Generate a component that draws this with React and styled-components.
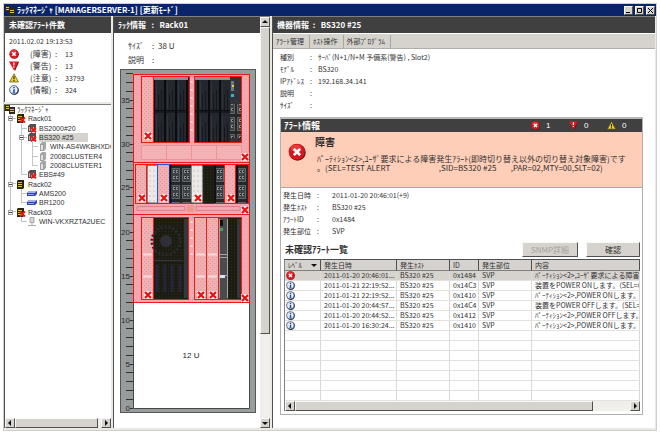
import React from "react";
import styled, { createGlobalStyle, css } from "styled-components";

const colors = {
  title: "#0a246a",
  header: "#404040",
  face: "#d6d3ce",
  frame: "#ebe9e4",
  shade: "#808080",
  dark: "#505050",
  text: "#303030",
  alert: "#ffceb8",
};

const GlobalStyle = createGlobalStyle`
  * {
    box-sizing: border-box;
  }

  body {
    margin: 0;
    background: #ffffff;
    color: ${colors.text};
    font-family: "Noto Sans CJK JP", sans-serif;
    font-size: 8px;
    line-height: 12px;
  }

  button {
    margin: 0;
    padding: 0;
    font: inherit;
    color: inherit;
  }
`;

const raised = css`
  background: ${colors.face};
  border: 1px solid;
  border-color: #f8f8f8 ${colors.dark} ${colors.dark} #f8f8f8;
`;

const Page = styled.div`
  display: flex;
  min-height: 100vh;
  padding: 3px 3px 4px;
`;

const Window = styled.div`
  flex: 1;
  min-width: 0;
  display: flex;
  flex-direction: column;
  background: ${colors.frame};
  border: 1px solid #d0cec8;
`;

const TitleBar = styled.header`
  display: flex;
  align-items: center;
  gap: 2px;
  height: 12px;
  padding: 0 1px;
  background: ${colors.title};
  color: #ffffff;
`;

const Title = styled.h1`
  flex: 1;
  margin: 0;
  font-size: 8px;
  line-height: 12px;
  white-space: pre;
`;

const WindowButton = styled.button`
  ${raised}
  display: flex;
  align-items: center;
  justify-content: center;
  width: 9px;
  height: 9px;
`;

const Columns = styled.main`
  flex: 1;
  display: grid;
  grid-template-columns: 107px 157px minmax(0, 1fr);
  gap: 2px;
  padding: 0 1px 2px 0;
`;

const LeftColumn = styled.div`
  display: flex;
  flex-direction: column;
  gap: 2px;
  min-width: 0;
`;

const Panel = styled.section`
  display: flex;
  flex-direction: column;
  flex: ${(props) => (props.$grow ? 1 : "none")};
  min-width: 0;
  background: #ffffff;
  border-left: 1px solid ${colors.dark};
  border-top: 1px solid ${colors.shade};
`;

const PanelHeader = styled.h2`
  height: 16px;
  margin: 0;
  padding: 0 4px;
  background: ${colors.header};
  color: #ffffff;
  font-size: 8px;
  line-height: 16px;
  white-space: pre;
`;

const Counts = styled.div`
  padding: 1px 4px 6px;
`;

const CountDate = styled.div`
  font-size: 7px;
  line-height: 14px;
`;

const CountRow = styled.div`
  display: grid;
  grid-template-columns: 21px 25px 10px 1fr;
  align-items: center;
  height: 12px;
`;

const CountValue = styled.span`
  font-size: 7px;
`;

const Tree = styled.ul`
  display: grid;
  grid-template-rows: repeat(13, 1fr);
  height: 121px;
  margin: 0;
  padding: 0;
  list-style: none;
  overflow: hidden;
`;

const TreeRow = styled.li`
  display: flex;
  align-items: stretch;
  min-height: 0;
  font-family: "Liberation Sans", "Noto Sans CJK JP", sans-serif;
  font-size: 7px;
  line-height: 9px;
  white-space: nowrap;
`;

const Guide = styled.span`
  flex: none;
  display: flex;
  align-items: center;
  justify-content: center;
  width: 11px;
  background-repeat: no-repeat;
  background-image: ${(props) => (props.$line ? "linear-gradient(#c4c4c4, #c4c4c4)" : "none")},
    ${(props) => (props.$tick ? "linear-gradient(#c4c4c4, #c4c4c4)" : "none")};
  background-size: 1px ${(props) => (props.$line === "half" ? "50%" : "100%")}, 6px 1px;
  background-position: 5px 0, 5px 4px;
`;

const Expander = styled.button`
  display: flex;
  width: 5px;
  height: 5px;
  border: 1px solid #a0a0a0;
  background: #ffffff;
  align-items: center;

  &::before {
    content: "";
    width: 3px;
    height: 1px;
    background: #404040;
  }
`;

const TreeIcon = styled.span`
  flex: none;
  display: flex;
  align-items: center;
  width: 12px;
`;

const TreeLabel = styled.span`
  align-self: center;
  padding-right: ${(props) => (props.$selected ? 14 : 0)}px;
  background: ${(props) => (props.$selected ? colors.face : "none")};
`;

const Spacer = styled.div`
  flex: 1;
`;

const Bar = styled.div`
  display: flex;
  flex-direction: ${(props) => (props.$vertical ? "column" : "row")};
  ${(props) => (props.$vertical ? "width: 10px;" : "height: 10px;")}
  background: #f0efec;
`;

const BarButton = styled.button`
  ${raised}
  flex: none;
  display: flex;
  align-items: center;
  justify-content: center;
  width: 10px;
  height: 10px;
`;

const Thumb = styled.div`
  ${raised}
  flex: ${(props) => props.$size};
`;

const Track = styled.div`
  flex: ${(props) => props.$size};
`;

const RackPanel = styled(Panel)`
  flex-direction: row;
`;

const RackBody = styled.div`
  flex: 1;
  min-width: 0;
`;

const RackInfo = styled.dl`
  display: grid;
  grid-template-columns: 24px 6px 1fr;
  margin: 0;
  padding: 6px 14px 2px;
  line-height: 14px;
`;

const Term = styled.dt`
  margin: 0;
  white-space: nowrap;
`;

const Value = styled.dd`
  margin: 0;
  white-space: nowrap;
`;

const RackSvg = styled.svg`
  display: block;
  margin-left: 6px;
`;

const Toolbar = styled.nav`
  display: flex;
  align-items: center;
  height: 16px;
  background: ${colors.face};
  border-top: 1px solid #ffffff;
  border-bottom: 1px solid #b0aea8;
`;

const ToolButton = styled.button`
  height: 13px;
  padding: 0 5px 0 3px;
  border: 0;
  border-right: 1px solid #a8a6a0;
  background: none;
  font-size: 7px;
  white-space: nowrap;
`;

const Details = styled.dl`
  display: grid;
  grid-template-columns: ${(props) => props.$columns};
  margin: 0;
  padding: ${(props) => props.$pad};
  font-size: 7px;
`;

const AlertBox = styled.section`
  display: flex;
  flex-direction: column;
  margin: 6px 12px 0 7px;
  border: 1px solid #b0b0b0;
  border-top: 2px solid #b8b8b8;
`;

const AlertHeader = styled.div`
  display: flex;
  align-items: center;
  height: 13px;
  padding: 0 5px 0 3px;
  background: ${colors.header};
  color: #ffffff;
`;

const AlertTitle = styled.h3`
  flex: 1;
  margin: 0;
  font-size: 9px;
`;

const AlertCount = styled.span`
  display: flex;
  align-items: center;
  gap: 6px;
  width: 38px;
  padding-left: 8px;
  font-family: "Liberation Sans", sans-serif;
`;

const AlertBody = styled.div`
  display: grid;
  grid-template-columns: 27px 1fr;
  column-gap: 7px;
  height: 56px;
  background: ${colors.alert};
  border-bottom: 1px solid #a8a8a8;
`;

const AlertIcon = styled.div`
  padding: 11px 0 0 7px;
`;

const AlertText = styled.div`
  padding-top: 4px;
  min-width: 0;
`;

const Severity = styled.h4`
  margin: 0 0 6px;
  font-size: 10px;
  line-height: 12px;
`;

const Message = styled.p`
  margin: 0;
  padding-left: 2px;
  line-height: 9px;
  white-space: pre;
`;

const ListHeader = styled.div`
  display: flex;
  align-items: center;
  gap: 8px;
  padding: 5px 2px 2px 4px;
`;

const ListTitle = styled.h3`
  flex: 1;
  margin: 0;
  font-size: 9px;
`;

const ActionButton = styled.button`
  ${raised}
  width: ${(props) => (props.$wide ? 56 : 54)}px;
  height: 15px;

  &:disabled {
    color: #a4a29c;
  }
`;

const ListFrame = styled.div`
  margin: 0 2px 3px 3px;
  border-left: 1px solid ${colors.shade};
  border-top: 1px solid ${colors.dark};
  overflow: hidden;
`;

const Table = styled.table`
  width: 100%;
  table-layout: fixed;
  border-collapse: separate;
  border-spacing: 0;
  font-size: 7px;
`;

const Col = styled.col`
  width: ${(props) => (props.$width ? `${props.$width}px` : "auto")};
`;

const HeadCell = styled.th`
  height: 11px;
  padding: 0 3px;
  background: ${colors.face};
  border-right: 1px solid ${colors.dark};
  border-bottom: 1px solid ${colors.shade};
  font-weight: normal;
  line-height: 10px;
  text-align: left;
  white-space: nowrap;
`;

const HeadLabel = styled.span`
  display: flex;
  align-items: center;
  justify-content: space-between;
`;

const Row = styled.tr`
  background: ${(props) => (props.$selected ? colors.face : "#ffffff")};
`;

const Cell = styled.td`
  height: 10px;
  padding: 0 0 0 ${(props) => (props.$icon ? 1 : 3)}px;
  border-right: 1px solid #dcdad6;
  border-bottom: 1px solid #e4e2de;
  line-height: 9px;
  overflow: hidden;
  white-space: nowrap;

  svg {
    display: block;
  }
`;

function ErrorIcon({ size = 10 }) {
  return (
    <svg width={size} height={size} viewBox="0 0 20 20">
      <circle cx="10.5" cy="10.5" r="9.2" fill="#701010" />
      <circle cx="9.7" cy="9.7" r="9" fill="#d81820" />
      <ellipse cx="9" cy="6" rx="6" ry="4" fill="#f05050" opacity="0.6" />
      <path d="M6.5 6.5l7 7m0-7l-7 7" stroke="#fff" strokeWidth="3" />
    </svg>
  );
}

function WarningIcon({ size = 10 }) {
  return (
    <svg width={size} height={size} viewBox="0 0 20 20">
      <path d="M2 2h18l-8 18z" fill="#701010" />
      <path d="M0 1h19l-9 18z" fill="#e01820" />
      <path d="M9.7 3v6m0 2v2.4" stroke="#fff" strokeWidth="2.6" />
    </svg>
  );
}

function CautionIcon({ size = 10 }) {
  return (
    <svg width={size} height={size} viewBox="0 0 20 20">
      <path d="M10 1.5l8.8 16.5H1.2z" fill="#f0d030" stroke="#706010" strokeWidth="1.6" />
      <path d="M10 6.5v6m0 1.6v2.4" stroke="#302800" strokeWidth="2.4" />
    </svg>
  );
}

function InfoIcon({ size = 10 }) {
  return (
    <svg width={size} height={size} viewBox="0 0 20 20">
      <circle cx="10.6" cy="10.6" r="9.2" fill="#202c3c" />
      <circle cx="9.6" cy="9.6" r="8.4" fill="#e4eefa" stroke="#405068" strokeWidth="1.6" />
      <path d="M10 4v2.6m0 1.8v6.4" stroke="#1848b0" strokeWidth="3" />
      <path d="M7.5 15h5" stroke="#1848b0" strokeWidth="1.4" />
    </svg>
  );
}

const statusIcons = {
  error: ErrorIcon,
  warning: WarningIcon,
  caution: CautionIcon,
  info: InfoIcon,
};

function NodeIcon({ kind, failed }) {
  return (
    <svg width="10" height="9" viewBox="0 0 10 9">
      {kind === "manager" && (
        <g>
          <path d="M0 0h5v6H0zM4 2h6v7H4z" fill="#302810" />
          <path d="M1 1.5h3M1 3.5h3M5 4.5h4M5 6.5h4" stroke="#e8c848" />
        </g>
      )}
      {kind === "rack" && (
        <g>
          <path d="M1 1l1-1h6v8l-1 1H1z" fill="#282418" />
          <path d="M2 2.5h4M2 4.5h4M2 6.5h4" stroke="#e8c040" />
        </g>
      )}
      {kind === "chassis" && (
        <g>
          <path d="M1 2l2-2h6v6L7 8H1z" fill="#505050" />
          <path d="M2.5 3v4M4.5 3v4M6.5 3v4" stroke="#b8b8b8" />
        </g>
      )}
      {kind === "blade" && (
        <g>
          <path d="M2 2l2-2h4v7L6 9H2z" fill="#a8a8a8" />
          <path d="M2.5 2.5h3v6h-3z" fill="#e0e0e0" stroke="#888" strokeWidth="0.6" />
        </g>
      )}
      {kind === "storage" && (
        <g>
          <path d="M0 4l2-2h8v3L8 7H0z" fill="#3040b0" />
          <path d="M0 4l2-2h8L8 4z" fill="#a0b0f0" />
          <path d="M1 5.5h6" stroke="#90a8ff" />
        </g>
      )}
      {kind === "host" && (
        <g stroke="#a8a8a8" fill="#d8d8d8">
          <path d="M3 .5h4v5H3zM1 8.5h8M5 6v2" />
        </g>
      )}
      {failed && <path d="M4 3.5l5 5m0-5l-5 5" stroke="#f01818" strokeWidth="1.8" />}
    </svg>
  );
}

function Arrow({ direction }) {
  const paths = {
    left: "M4 0v6L1 3z",
    right: "M2 0v6l3-3z",
    up: "M0 4h6L3 1z",
    down: "M0 2h6L3 5z",
  };
  return (
    <svg width="6" height="6" viewBox="0 0 6 6">
      <path d={paths[direction]} fill="#101010" />
    </svg>
  );
}

function ScrollBar({ vertical, thumb, rest }) {
  return (
    <Bar $vertical={vertical}>
      <BarButton type="button" aria-label={vertical ? "Up" : "Left"}>
        <Arrow direction={vertical ? "up" : "left"} />
      </BarButton>
      <Thumb $size={thumb} />
      <Track $size={rest} />
      <BarButton type="button" aria-label={vertical ? "Down" : "Right"}>
        <Arrow direction={vertical ? "down" : "right"} />
      </BarButton>
    </Bar>
  );
}

const counts = [
  { kind: "error", label: "(障害)", value: 13 },
  { kind: "warning", label: "(警告)", value: 13 },
  { kind: "caution", label: "(注意)", value: 33793 },
  { kind: "info", label: "(情報)", value: 324 },
];

// guides: "x" = line + tick, "e" = end of branch, "|" = line only, " " = empty
const nodes = [
  { guides: "", kind: "manager", label: "ﾗｯｸﾏﾈｰｼﾞｬ" },
  { guides: "x", open: true, kind: "rack", failed: true, label: "Rack01" },
  { guides: "|x", kind: "chassis", failed: true, label: "BS2000#20" },
  { guides: "|x", open: true, kind: "chassis", failed: true, label: "BS320 #25", selected: true },
  { guides: "||x", kind: "blade", label: "WIN-AS4WKBHXD60" },
  { guides: "||x", kind: "blade", label: "2008CLUSTER4" },
  { guides: "||e", kind: "blade", label: "2008CLUSTER1" },
  { guides: "|e", kind: "chassis", failed: true, label: "EBS#49" },
  { guides: "x", open: true, kind: "rack", label: "Rack02" },
  { guides: "|x", kind: "storage", label: "AMS200" },
  { guides: "|e", kind: "storage", label: "BR1200" },
  { guides: "e", open: true, kind: "rack", failed: true, label: "Rack03" },
  { guides: " e", kind: "host", label: "WIN-VKXRZTA2UEC" },
];

const lines = { x: "full", e: "half", "|": "full" };

function NodeTree() {
  return (
    <Tree>
      {nodes.map((node) => (
        <TreeRow key={node.label}>
          {node.guides.split("").map((guide, i) => (
            <Guide key={i} $line={lines[guide]} $tick={guide === "x" || guide === "e"}>
              {node.open && i === node.guides.length - 1 && (
                <Expander type="button" aria-label={node.label} />
              )}
            </Guide>
          ))}
          <TreeIcon>
            <NodeIcon kind={node.kind} failed={node.failed} />
          </TreeIcon>
          <TreeLabel $selected={node.selected}>{node.label}</TreeLabel>
        </TreeRow>
      ))}
    </Tree>
  );
}

function Fault({ x, y }) {
  return (
    <g>
      <rect x={x - 4} y={y - 4} width="8" height="8" fill="#fff" opacity="0.7" />
      <path
        d={`M${x - 3} ${y - 3}l6 6m0 -6l-6 6`}
        stroke="#e81010"
        strokeWidth="2.2"
      />
    </g>
  );
}

function Blade({ x, y, width, height, fill, stroke }) {
  return (
    <rect
      x={x + 0.5}
      y={y + 0.5}
      width={width}
      height={height}
      fill={fill}
      stroke={stroke || "none"}
    />
  );
}

function RackView() {
  const unit = 8.8;
  const base = 339.5;
  const ticks = Array.from({ length: 39 }, (_, i) => i);

  return (
    <RackSvg width="136" height="344" viewBox="0 0 136 344">
      <defs>
        <pattern id="mesh" width="4" height="4" patternUnits="userSpaceOnUse">
          <rect width="4" height="4" fill="#f3a9ae" />
          <path d="M0 0h1v1H0zM2 2h1v1H2z" fill="#ee9ca2" />
        </pattern>
        <pattern id="bladeMesh" width="4" height="4" patternUnits="userSpaceOnUse">
          <rect width="4" height="4" fill="#f0b0b2" />
          <path d="M0 0h1v1H0zM2 2h1v1H2z" fill="#e4989c" />
        </pattern>
        <pattern id="pale" width="4" height="5" patternUnits="userSpaceOnUse">
          <rect width="4" height="5" fill="#ece8e8" />
          <path d="M1 1h2v2H1z" fill="#dcd6d6" />
        </pattern>
        <pattern id="drives" width="11" height="33" patternUnits="userSpaceOnUse" x="33" y="11">
          <rect width="11" height="33" fill="#23282e" />
          <path d="M1 0v33" stroke="#0a0c10" strokeWidth="2" />
          <path d="M5.500 14v18M8.500 10v22" stroke="#15191e" />
          <path d="M3.500 2v26" stroke="#2e353c" />
          <path d="M0 32h11" stroke="#0c0e10" />
        </pattern>
        <pattern id="ports" width="11" height="17" patternUnits="userSpaceOnUse" x="50" y="98">
          <rect width="11" height="17" fill="#25282b" />
          <path d="M1.500 1.500h8v13h-8z" fill="#3c4144" stroke="#606669" />
          <path d="M3 3h2v3H3zM6 3h2v3H6zM3 9h2v3H3zM6 9h2v3H6z" fill="#888e90" />
          <path d="M4 4h1v1H4zM7 4h1v1H7zM4 10h1v1H4zM7 10h1v1H7z" fill="#101214" />
        </pattern>
        <pattern id="vent" width="3" height="3" patternUnits="userSpaceOnUse">
          <rect width="3" height="3" fill="#1c1c12" />
          <path d="M0 0h1v1H0z" fill="#2c2c1a" />
        </pattern>
      </defs>

      <rect x="0.5" y="0.5" width="135" height="343" fill="#989c9c" stroke="#545858" />
      <path d="M13.5 5v334.5h116V5" fill="#fff" stroke="#484848" />

      {ticks.map((n) => (
        <path
          key={n}
          d={`M${n % 5 ? 6 : 10} ${Math.round(base - n * unit) - 0.5}H13`}
          stroke="#303030"
        />
      ))}
      {[0, 5, 10, 15, 20, 25, 30, 35].map((n) => (
        <text
          key={n}
          x="10"
          y={Math.round(base - n * unit) + 2}
          fontSize="8"
          fontFamily="Liberation Sans"
          textAnchor="end"
          fill="#282828"
        >
          {n}
        </text>
      ))}

      {/* top chassis */}
      <rect x="13.5" y="5.5" width="116" height="88" fill="url(#mesh)" stroke="#f01818" />
      <Blade x={21} y={7} width={48} height={66} fill="url(#drives)" stroke="#f01818" />
      <Blade x={21} y={7} width={12} height={66} fill="url(#bladeMesh)" stroke="#f01818" />
      <Blade x={74} y={7} width={47} height={66} fill="url(#drives)" stroke="#f01818" />
      <path d="M34 9.5h34M75 9.5h35" stroke="#8c9090" strokeWidth="3" />
      <path d="M34 41.5h34M75 41.5h35" stroke="#0c0e12" />
      <rect x="110" y="8" width="11" height="65" fill="#30343a" />
      <rect x="110" y="35" width="11" height="34" fill="url(#ports)" />
      <path d="M111 12h3v10h-3z" fill="#70767a" />
      <path d="M112 16h2v2h-2z" fill="#e8d030" />
      <path d="M111 25h3v3h-3z" fill="#30b8c8" />
      <path
        d="M21.5 76.500h100v14h-100zM46.500 76v14M71.500 76v14M96.500 76v14"
        fill="#fff"
        fillOpacity="0.12"
        stroke="#e48088"
        strokeOpacity="0.6"
      />
      <path d="M71.500 12v50" stroke="#f8d8d8" strokeWidth="2" strokeDasharray="2 6" />
      <Fault x={28} y={67} />
      <Fault x={125} y={88} />

      {/* blade chassis */}
      <rect x="13.5" y="93.5" width="116" height="52" fill="url(#mesh)" stroke="#f01818" />
      <Blade x={15} y={95} width={113} height={39} fill="url(#ports)" stroke="#f01818" />
      <Blade x={15} y={95} width={11} height={39} fill="url(#bladeMesh)" stroke="#f01818" />
      <Blade x={27} y={96} width={10} height={37} fill="url(#pale)" />
      <Blade x={71} y={96} width={11} height={37} fill="url(#pale)" />
      <Blade x={83} y={97} width={11} height={37} fill="url(#vent)" />
      <Blade x={104} y={95} width={11} height={39} fill="url(#bladeMesh)" stroke="#f01818" />
      <Blade x={37} y={95} width={12} height={39} fill="url(#bladeMesh)" stroke="#1858e8" />
      <path d="M50.500 96v38M95 96v38M117 96v38" stroke="#101214" strokeWidth="2" />
      <path d="M17 137.500h48v4h-48zM76 137.500h44v4h-44z" fill="none" stroke="#e08088" />
      <rect x="67" y="136" width="7" height="7" fill="#f09888" />
      <Fault x={22} y={129} />
      <Fault x={44} y={129} />
      <Fault x={78} y={129} />
      <Fault x={111} y={129} />
      <Fault x={125} y={141} />

      {/* lower chassis */}
      <rect x="13.5" y="145.500" width="116" height="88" fill="url(#mesh)" stroke="#f01818" />
      <Blade x={21} y={148} width={47} height={82} fill="url(#vent)" stroke="#f01818" />
      <Blade x={21} y={148} width={12} height={82} fill="url(#bladeMesh)" stroke="#f01818" />
      <path d="M64 150h4v79h-4z" fill="#34383c" />
      <circle cx="46" cy="172" r="14" fill="none" stroke="#2a2b30" strokeWidth="3" strokeDasharray="2 2" />
      <circle cx="46" cy="172" r="6" fill="#2e2f38" />
      <path d="M34 191.500h29" stroke="#343648" />
      <path d="M37 196v27M45 196v27M52 196v27M60 196v27" stroke="#24263a" strokeWidth="3" />
      <Blade x={74} y={148} width={47} height={82} fill="url(#vent)" stroke="#f01818" />
      <Blade x={74} y={148} width={12} height={82} fill="url(#bladeMesh)" stroke="#f01818" />
      <Blade x={86} y={148} width={12} height={82} fill="url(#bladeMesh)" stroke="#f01818" />
      <rect x="99" y="149" width="9" height="81" fill="#484c50" />
      <path
        d="M99.500 150v79M107.500 150v79M99 185.500h9M99 188.500h9M99 206.500h9"
        stroke="#a0a4a4"
      />
      <path d="M100 206h5v3h-5z" fill="#d8e4f4" />
      <path d="M100 159h3v3h-3z" fill="#38a858" />
      <path d="M100 151h3v6h-3z" fill="#101214" />
      <path d="M117 150h4v79h-4z" fill="#34383c" />
      <path d="M23 185.500h9M23 207.500h9M76 185.500h9M76 207.500h9M88 185.500h9M88 207.500h9" stroke="#f8dcdc" strokeWidth="2" />
      <path d="M71.500 152v36" stroke="#f8e0e0" strokeWidth="2" strokeDasharray="2 6" />
      <Fault x={28} y={226} />
      <Fault x={81} y={226} />
      <Fault x={93} y={226} />
      <Fault x={125} y={229} />

      <text x="71" y="289" fontSize="8" textAnchor="middle" fontFamily="Liberation Sans" fill="#282828">
        12 U
      </text>
    </RackSvg>
  );
}

const device = [
  ["種別", "ｻｰﾊﾞ(N+1/N+M 予備系(警告) , Slot2)"],
  ["ﾓﾃﾞﾙ", "BS320"],
  ["IPｱﾄﾞﾚｽ", "192.168.34.141"],
  ["説明", ""],
  ["ｻｲｽﾞ", ""],
];

const alertInfo = [
  ["発生日時", "2011-01-20 20:46:01(+9)"],
  ["発生ﾎｽﾄ", "BS320 #25"],
  ["ｱﾗｰﾄID", "0x1484"],
  ["発生部位", "SVP"],
];

const alerts = [
  ["error", "2011-01-20 20:46:01...", "0x1484", "ﾊﾟｰﾃｨｼｮﾝ<2>,ﾕｰｻﾞ要求による障害"],
  ["info", "2011-01-21 22:19:52...", "0x14C3", "装置をPOWER ONします。(SEL=00000"],
  ["info", "2011-01-21 22:19:52...", "0x1410", "ﾊﾟｰﾃｨｼｮﾝ<2>,POWER ONします。(SE"],
  ["info", "2011-01-20 20:44:57...", "0x14C4", "装置をPOWER OFFします。(SEL=0000"],
  ["info", "2011-01-20 20:44:52...", "0x1412", "ﾊﾟｰﾃｨｼｮﾝ<2>,POWER OFFします。(S"],
  ["info", "2011-01-20 16:30:24...", "0x1410", "ﾊﾟｰﾃｨｼｮﾝ<2>,POWER ONします。(SE"],
];

const emptyRows = [1, 2, 3, 4, 5, 6, 7];

function DetailList({ items, columns, pad }) {
  return (
    <Details $columns={columns} $pad={pad}>
      {items.map(([label, value]) => (
        <React.Fragment key={label}>
          <Term>{label}</Term>
          <span>:</span>
          <Value>{value}</Value>
        </React.Fragment>
      ))}
    </Details>
  );
}

function AlertTable() {
  return (
    <ListFrame>
      <Table>
        <colgroup>
          <Col $width={36} />
          <Col $width={76} />
          <Col $width={53} />
          <Col $width={29} />
          <Col $width={53} />
          <Col />
        </colgroup>
        <thead>
          <tr>
            <HeadCell>
              <HeadLabel>
                ﾚﾍﾞﾙ
                <Arrow direction="down" />
              </HeadLabel>
            </HeadCell>
            <HeadCell>発生日時</HeadCell>
            <HeadCell>発生ﾎｽﾄ</HeadCell>
            <HeadCell>ID</HeadCell>
            <HeadCell>発生部位</HeadCell>
            <HeadCell>内容</HeadCell>
          </tr>
        </thead>
        <tbody>
          {alerts.map(([kind, date, id, text], i) => {
            const Icon = statusIcons[kind];
            return (
              <Row key={i} $selected={i === 0}>
                <Cell $icon>
                  <Icon size={9} />
                </Cell>
                <Cell>{date}</Cell>
                <Cell>BS320 #25</Cell>
                <Cell>{id}</Cell>
                <Cell>SVP</Cell>
                <Cell>{text}</Cell>
              </Row>
            );
          })}
          {emptyRows.map((n) => (
            <Row key={n}>
              <Cell />
              <Cell />
              <Cell />
              <Cell />
              <Cell />
              <Cell />
            </Row>
          ))}
        </tbody>
      </Table>
      <ScrollBar thumb={300} rest={37} />
    </ListFrame>
  );
}

function App() {
  return (
    <Page>
      <GlobalStyle />
      <Window>
        <TitleBar>
          <NodeIcon kind="manager" />
          <Title>ﾗｯｸﾏﾈｰｼﾞｬ [MANAGERSERVER-1] [更新ﾓｰﾄﾞ]</Title>
          <WindowButton type="button" aria-label="Minimize">
            <svg width="7" height="7">
              <path d="M1 5.500h4" stroke="#000" />
            </svg>
          </WindowButton>
          <WindowButton type="button" aria-label="Maximize">
            <svg width="7" height="7">
              <path d="M1.500 1.500h4v4h-4z" fill="none" stroke="#000" />
            </svg>
          </WindowButton>
          <WindowButton type="button" aria-label="Close">
            <svg width="7" height="7">
              <path d="M1 1l5 5m0-5l-5 5" stroke="#000" />
            </svg>
          </WindowButton>
        </TitleBar>

        <Columns>
          <LeftColumn>
            <Panel>
              <PanelHeader>未確認ｱﾗｰﾄ件数</PanelHeader>
              <Counts>
                <CountDate>2011.02.02 19:13:53</CountDate>
                {counts.map(({ kind, label, value }) => {
                  const Icon = statusIcons[kind];
                  return (
                    <CountRow key={kind}>
                      <Icon />
                      <span>{label}</span>
                      <span>:</span>
                      <CountValue>{value}</CountValue>
                    </CountRow>
                  );
                })}
              </Counts>
            </Panel>
            <Panel $grow>
              <NodeTree />
              <Spacer />
              <ScrollBar thumb={82} rest={3} />
            </Panel>
          </LeftColumn>

          <RackPanel>
            <RackBody>
              <PanelHeader>ﾗｯｸ情報   :   Rack01</PanelHeader>
              <RackInfo>
                <Term>ｻｲｽﾞ</Term>
                <span>:</span>
                <Value>38 U</Value>
                <Term>説明</Term>
                <span>:</span>
                <Value />
              </RackInfo>
              <RackView />
            </RackBody>
            <ScrollBar vertical thumb={307} rest={84} />
          </RackPanel>

          <Panel>
            <PanelHeader>機器情報  :   BS320 #25</PanelHeader>
            <Toolbar>
              <ToolButton type="button">ｱﾗｰﾄ管理</ToolButton>
              <ToolButton type="button">ﾎｽﾄ操作</ToolButton>
              <ToolButton type="button">外部ﾌﾟﾛｸﾞﾗﾑ</ToolButton>
            </Toolbar>
            <DetailList items={device} columns="30px 8px 1fr" pad="2px 7px 0" />
            <AlertBox>
              <AlertHeader>
                <AlertTitle>ｱﾗｰﾄ情報</AlertTitle>
                <AlertCount>
                  <ErrorIcon size={9} />1
                </AlertCount>
                <AlertCount>
                  <WarningIcon size={9} />0
                </AlertCount>
                <AlertCount>
                  <CautionIcon size={9} />0
                </AlertCount>
              </AlertHeader>
              <AlertBody>
                <AlertIcon>
                  <ErrorIcon size={18} />
                </AlertIcon>
                <AlertText>
                  <Severity>障害</Severity>
                  <Message>
                    ﾊﾟｰﾃｨｼｮﾝ&lt;2&gt;,ﾕｰｻﾞ要求による障害発生ｱﾗｰﾄ(即時切り替え以外の切り替え対象障害)です
                  </Message>
                  <Message>
                    {"。(SEL=TEST ALERT                           ,SID=BS320 #25        ,PAR=02,MTY=00,SLT=02)"}
                  </Message>
                </AlertText>
              </AlertBody>
              <DetailList items={alertInfo} columns="34px 15px 1fr" pad="1px 2px 0" />
              <ListHeader>
                <ListTitle>未確認ｱﾗｰﾄ一覧</ListTitle>
                <ActionButton type="button" $wide disabled>
                  SNMP詳細
                </ActionButton>
                <ActionButton type="button">確認</ActionButton>
              </ListHeader>
              <AlertTable />
            </AlertBox>
          </Panel>
        </Columns>
      </Window>
    </Page>
  );
}

export default App;
